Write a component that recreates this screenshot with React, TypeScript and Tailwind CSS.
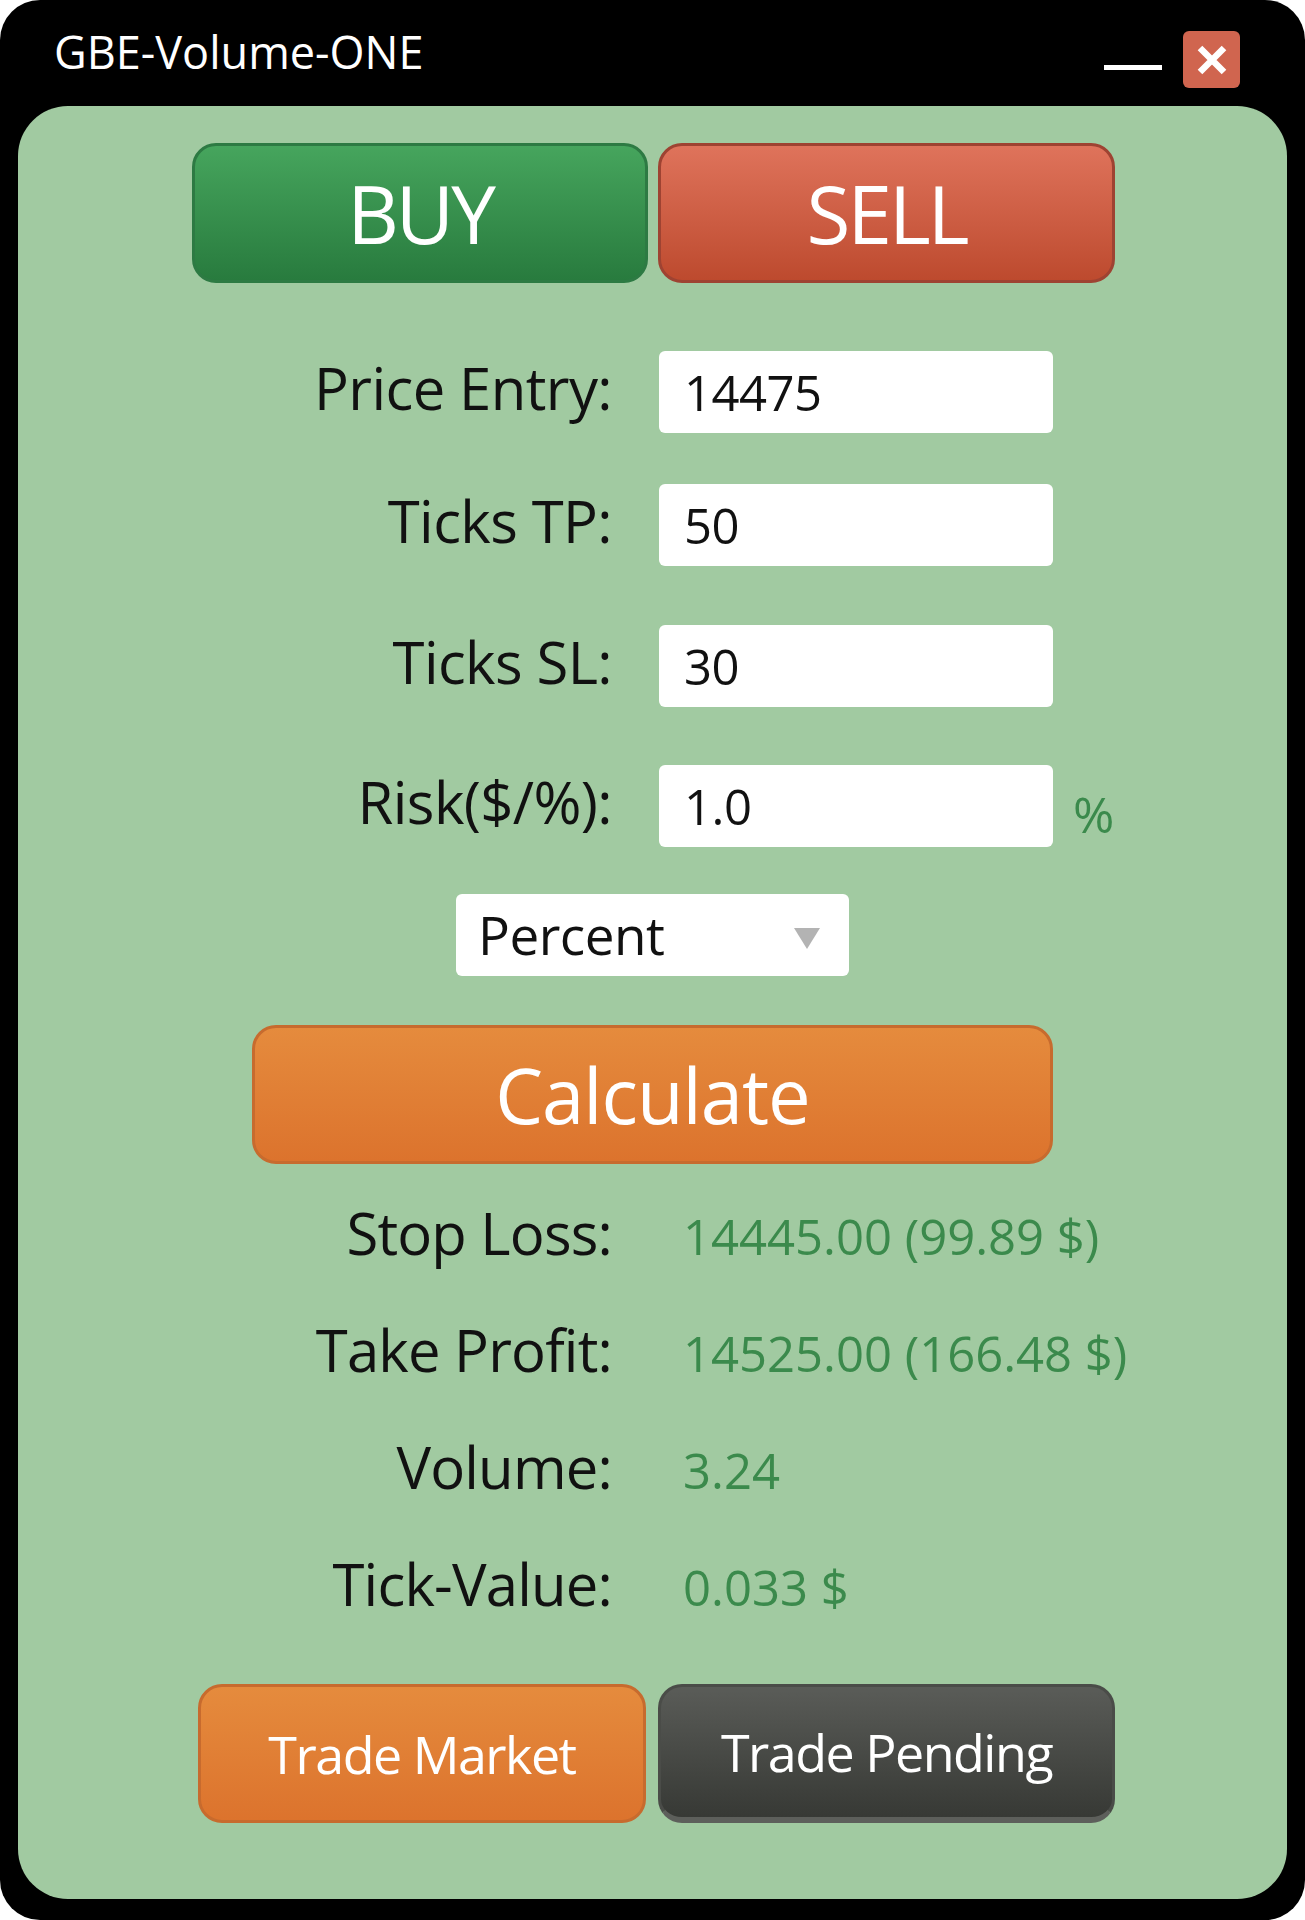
import React from "react";

function FormRow({ label, value, mt, suffix }: { label: string; value: string; mt: string; suffix?: boolean }) {
  return (
    <div className={`flex items-start h-[82px] ${mt}`}>
      <div className="w-[594px] text-right text-[58px] leading-[73px] text-[#111] tracking-[-0.6px]">{label}</div>
      <div className="ml-[47px] w-[394px] h-[82px] bg-white rounded-[6px] pl-[25px] text-[49px] leading-[82px] text-[#111] tracking-[-0.5px]">
        {value}
      </div>
      {suffix && <div className="ml-[20px] pt-[8px] h-[82px] text-[50px] leading-[82px] text-[#3b8a4c]">%</div>}
    </div>
  );
}

function ResultRow({ label, value }: { label: string; value: string }) {
  return (
    <div className="flex items-baseline h-[117px] leading-[117px]">
      <div className="w-[594px] text-right text-[58px] text-[#111] tracking-[-0.8px]">{label}</div>
      <div className="ml-[71px] text-[49px] text-[#3b8a4c]">{value}</div>
    </div>
  );
}

export default function App() {
  return (
    <div className="w-[1305px] h-[1920px] bg-white font-['Open_Sans',sans-serif]">
      <div className="w-[1305px] h-[1920px] bg-black rounded-[40px] flex flex-col">
        <div className="h-[106px] flex justify-between items-start pl-[54px] pr-[65px] shrink-0">
          <div className="mt-[29px] text-white text-[45px] leading-[46px]">GBE-Volume-ONE</div>
          <div className="flex items-start gap-[21px] mt-[31px]">
            <div className="mt-[34px] w-[58px] h-[5px] bg-white"></div>
            <div className="w-[57px] h-[57px] bg-[#d0654f] rounded-[6px] flex items-center justify-center">
              <svg width="34" height="34" viewBox="0 0 34 34">
                <path d="M5 5 L29 29 M29 5 L5 29" stroke="#ffffff" strokeWidth="6.5" strokeLinecap="butt" />
              </svg>
            </div>
          </div>
        </div>
        <div className="mx-[18px] mb-[21px] flex-1 rounded-[50px] bg-[#a1caa1] flex flex-col pt-[37px]">
          <div className="flex justify-center gap-[10px] pl-[2px]">
            <div className="w-[456px] h-[140px] rounded-[24px] border-[3px] border-[#2d7a43] bg-linear-to-b from-[#46a55d] to-[#287b3e] flex items-center justify-center text-white text-[80px] leading-none tracking-[-3px]">
              BUY
            </div>
            <div className="w-[457px] h-[140px] rounded-[24px] border-[3px] border-[#9e4332] bg-linear-to-b from-[#df735b] to-[#bd4a2e] flex items-center justify-center text-white text-[80px] leading-none tracking-[-3px]">
              SELL
            </div>
          </div>

          <FormRow label="Price Entry:" value="14475" mt="mt-[68px]" />
          <FormRow label="Ticks TP:" value="50" mt="mt-[51px]" />
          <FormRow label="Ticks SL:" value="30" mt="mt-[59px]" />
          <FormRow label="Risk($/%):" value="1.0" mt="mt-[58px]" suffix />

          <div className="flex justify-center mt-[47px]">
            <div className="w-[393px] h-[82px] bg-white rounded-[6px] flex items-center justify-between pl-[22px] pr-[29px]">
              <span className="text-[53px] leading-[82px] text-[#111] tracking-[-0.5px]">Percent</span>
              <svg width="26" height="21" viewBox="0 0 26 21" className="mt-[6px]">
                <path d="M0 0 L26 0 L13 21 Z" fill="#b3b3b3" />
              </svg>
            </div>
          </div>

          <div className="flex justify-center mt-[49px]">
            <div className="w-[801px] h-[139px] rounded-[24px] border-[3px] border-[#c76b2e] bg-linear-to-b from-[#e58b3d] to-[#dc732d] flex items-center justify-center text-white text-[76px] leading-none tracking-[-1px]">
              Calculate
            </div>
          </div>

          <div className="mt-[10px] flex flex-col">
            <ResultRow label="Stop Loss:" value="14445.00 (99.89 $)" />
            <ResultRow label="Take Profit:" value="14525.00 (166.48 $)" />
            <ResultRow label="Volume:" value="3.24" />
            <ResultRow label="Tick-Value:" value="0.033 $" />
          </div>

          <div className="flex justify-center gap-[12px] mt-[42px] pl-[8px]">
            <div className="w-[448px] h-[139px] rounded-[24px] border-[3px] border-[#c76b2e] bg-linear-to-b from-[#e58b3d] to-[#dc732d] flex items-center justify-center text-white text-[52px] leading-none tracking-[-1.5px]">
              Trade Market
            </div>
            <div className="w-[457px] h-[139px] rounded-[24px] border-[3px] border-[#4a4c48] border-b-[6px] border-b-[#5d5f5b] bg-linear-to-b from-[#5a5c58] to-[#373935] flex items-center justify-center text-white text-[52px] leading-none tracking-[-1.5px]">
              Trade Pending
            </div>
          </div>
        </div>
      </div>
    </div>
  );
}
